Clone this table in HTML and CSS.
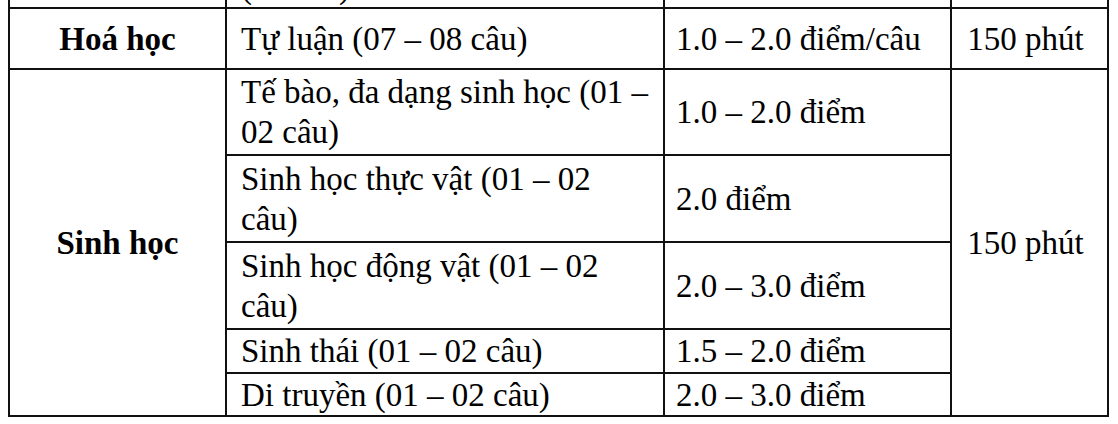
FILE: index.html
```html
<!DOCTYPE html>
<html lang="vi">
<head>
<meta charset="utf-8">
<title>Bảng môn thi</title>
<link rel="stylesheet" href="styles.css">
</head>
<body>
<div class="viewport">
  <table class="exam">
    <colgroup>
      <col class="c-subject">
      <col class="c-topic">
      <col class="c-score">
      <col class="c-time">
    </colgroup>
    <tbody>
      <tr class="r-prev">
        <td class="subject"></td>
        <td class="topic bottom">Tự luận<br>(01 câu)</td>
        <td class="score"></td>
        <td class="time"></td>
      </tr>
      <tr class="r-61">
        <td class="subject">Hoá học</td>
        <td class="topic">Tự luận (07 – 08 câu)</td>
        <td class="score">1.0 – 2.0 điểm/câu</td>
        <td class="time">150 phút</td>
      </tr>
      <tr class="r-86">
        <td class="subject" rowspan="5">Sinh học</td>
        <td class="topic">Tế bào, đa dạng sinh học (01 –<br>02 câu)</td>
        <td class="score">1.0 – 2.0 điểm</td>
        <td class="time" rowspan="5">150 phút</td>
      </tr>
      <tr class="r-87">
        <td class="topic">Sinh học thực vật (01 – 02<br>câu)</td>
        <td class="score">2.0 điểm</td>
      </tr>
      <tr class="r-87">
        <td class="topic">Sinh học động vật (01 – 02<br>câu)</td>
        <td class="score">2.0 – 3.0 điểm</td>
      </tr>
      <tr class="r-44">
        <td class="topic">Sinh thái (01 – 02 câu)</td>
        <td class="score">1.5 – 2.0 điểm</td>
      </tr>
      <tr class="r-43">
        <td class="topic">Di truyền (01 – 02 câu)</td>
        <td class="score">2.0 – 3.0 điểm</td>
      </tr>
    </tbody>
  </table>
</div>
</body>
</html>
```

FILE: styles.css
```css
html, body {
  margin: 0;
  padding: 0;
  background: #ffffff;
}

.viewport {
  width: 1118px;
  height: 424px;
  overflow: hidden;
  padding-left: 8px;
  box-sizing: border-box;
}

.exam {
  border-collapse: collapse;
  table-layout: fixed;
  width: 1101px;
  margin-top: -80px;
  color: #000000;
}

.exam td {
  font-family: "Liberation Serif", "Tinos", "Times New Roman", "DejaVu Serif", serif;
  font-size: 33px;
  line-height: 40px;
  border: 2px solid #111111;
  padding: 0;
  vertical-align: middle;
  white-space: nowrap;
}

.c-subject { width: 217px; }
.c-topic { width: 438px; }
.c-score { width: 287px; }
.c-time { width: 157px; }

.exam td.subject {
  font-weight: bold;
  text-align: center;
}

.exam td.topic {
  padding-left: 14px;
  text-align: left;
}

.exam td.score {
  padding-left: 11px;
  text-align: left;
}

.exam td.time {
  text-align: center;
  padding-right: 8px;
}

.exam td.bottom {
  vertical-align: bottom;
}

.r-prev td { height: 85px; }
.r-61 td { height: 59px; }
.r-86 td { height: 84px; }
.r-87 td { height: 85px; }
.r-44 td { height: 42px; }
.r-43 td { height: 41px; }
```
